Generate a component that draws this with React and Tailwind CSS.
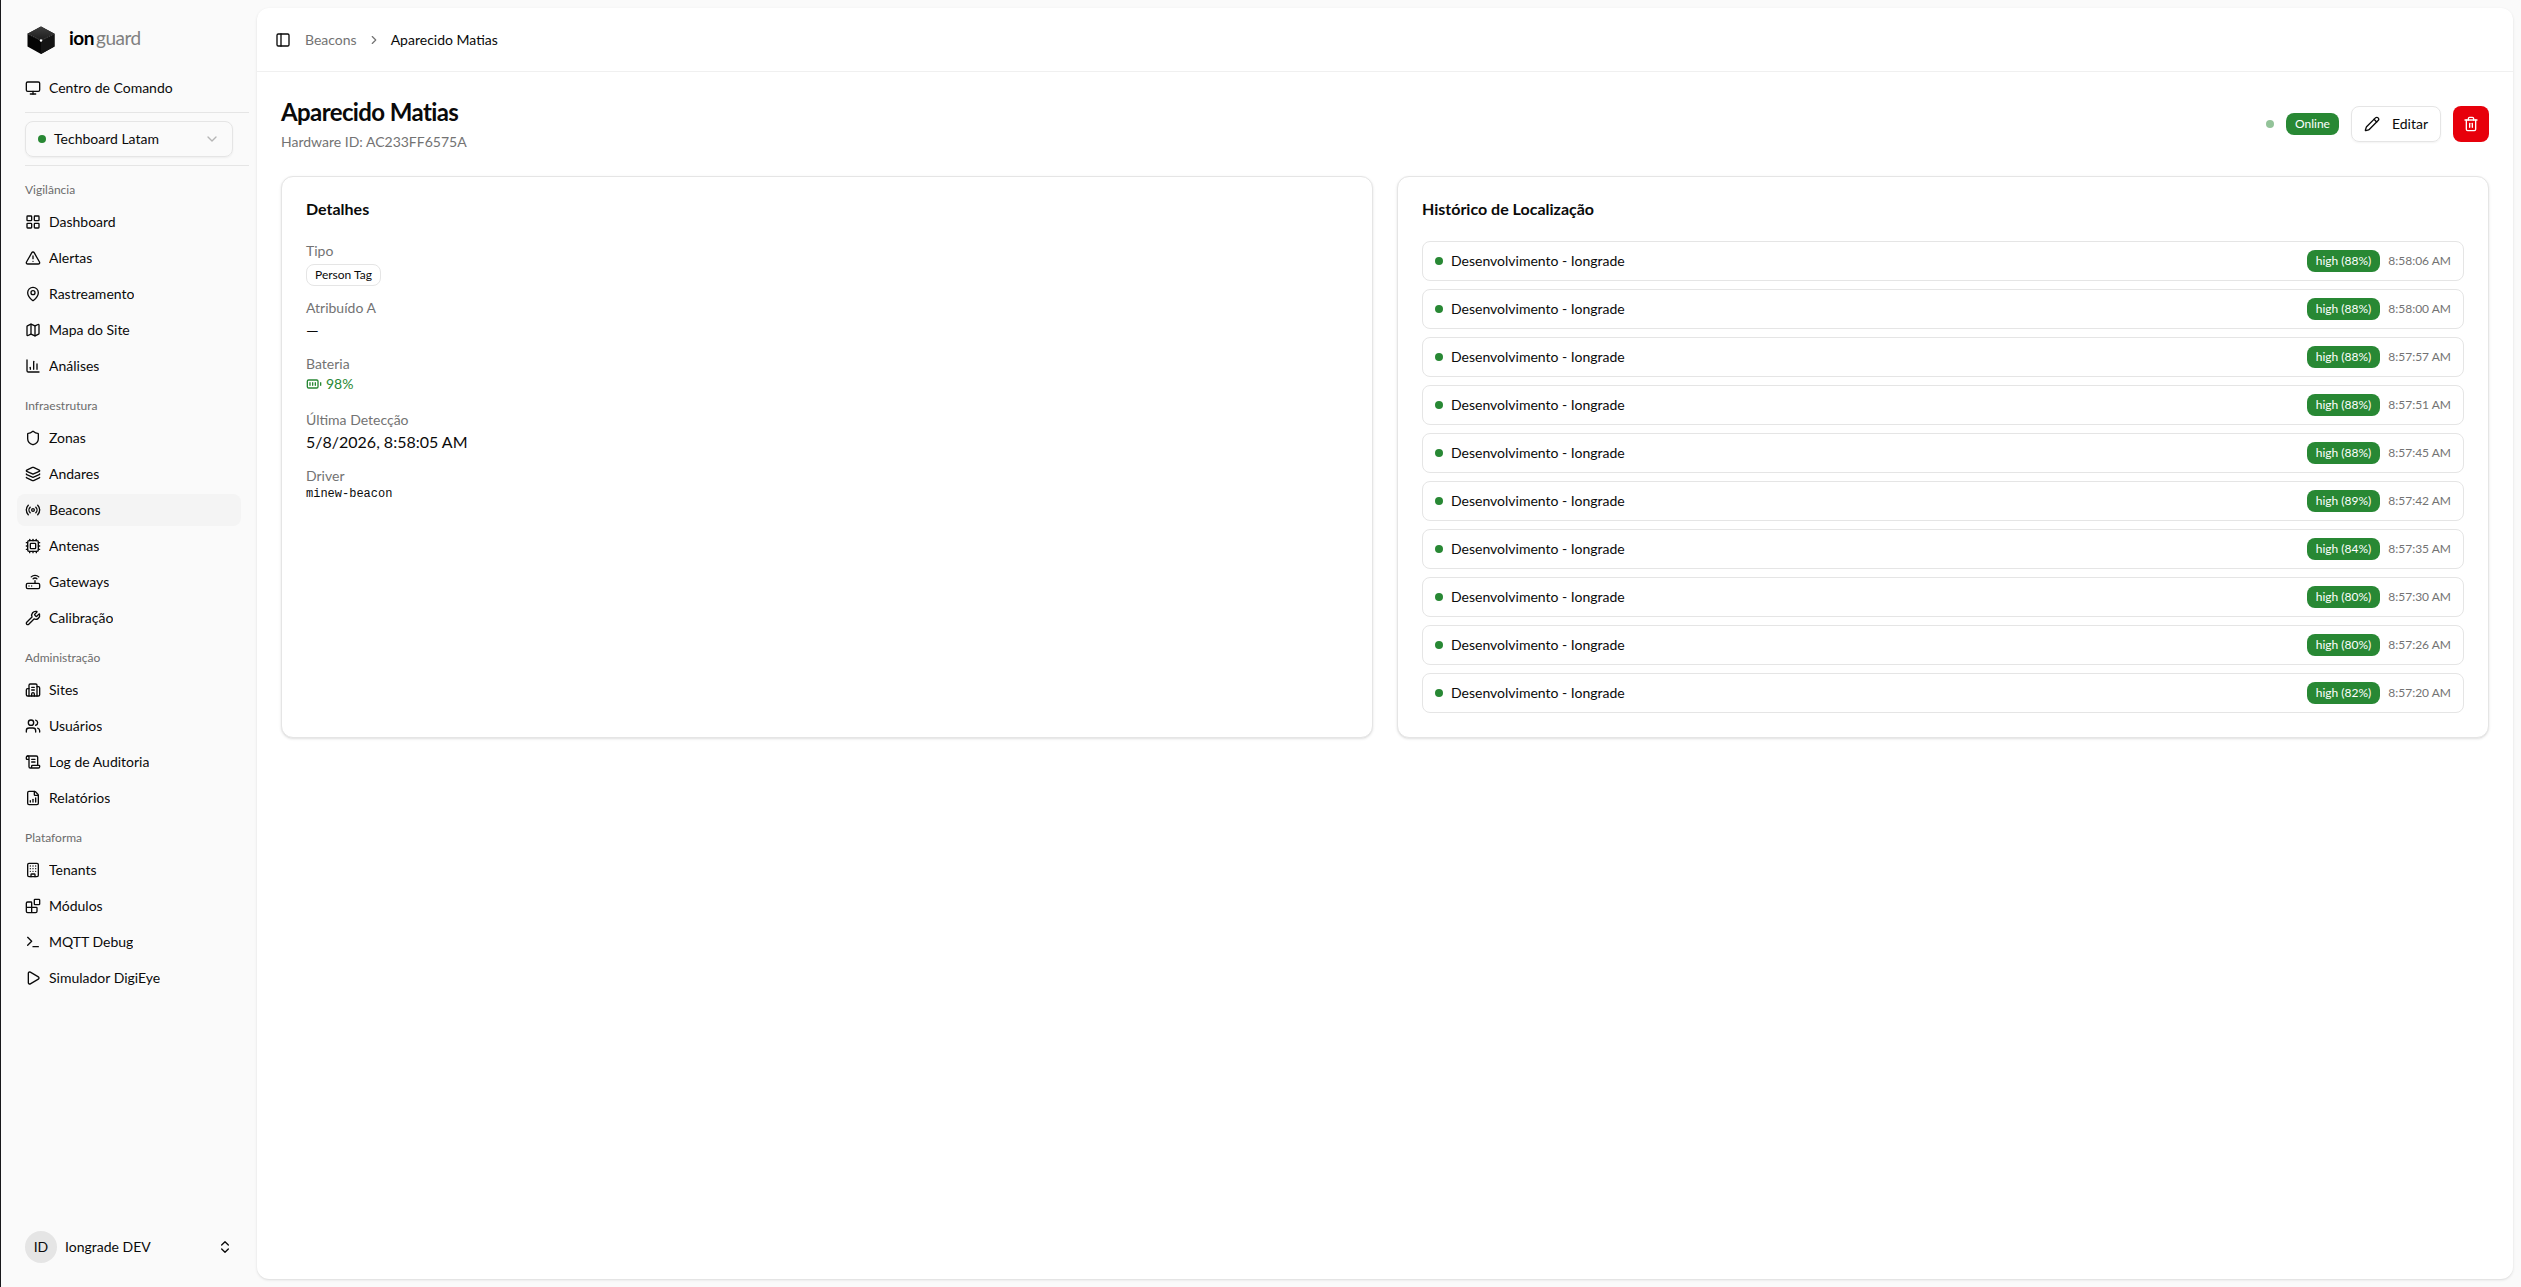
import React from "react";
import {
  Monitor, LayoutGrid, TriangleAlert, MapPin, Map, Shield, Layers, Radio, Cpu, Router, Wrench,
  Building2, Users, ScrollText, FileChartColumnIncreasing, Building, Blocks, Terminal, Play,
  ChevronDown, ChevronRight, ChevronsUpDown, PanelLeft, Pencil, Trash2, BatteryFull, ChartColumn,
} from "lucide-react";

const groups = [
  { label: "Vigilância", items: [["Dashboard", LayoutGrid], ["Alertas", TriangleAlert], ["Rastreamento", MapPin], ["Mapa do Site", Map], ["Análises", ChartColumn]] },
  { label: "Infraestrutura", items: [["Zonas", Shield], ["Andares", Layers], ["Beacons", Radio], ["Antenas", Cpu], ["Gateways", Router], ["Calibração", Wrench]] },
  { label: "Administração", items: [["Sites", Building2], ["Usuários", Users], ["Log de Auditoria", ScrollText], ["Relatórios", FileChartColumnIncreasing]] },
  { label: "Plataforma", items: [["Tenants", Building], ["Módulos", Blocks], ["MQTT Debug", Terminal], ["Simulador DigiEye", Play]] },
];

const history = [
  [88, "8:58:06 AM"], [88, "8:58:00 AM"], [88, "8:57:57 AM"], [88, "8:57:51 AM"], [88, "8:57:45 AM"],
  [89, "8:57:42 AM"], [84, "8:57:35 AM"], [80, "8:57:30 AM"], [80, "8:57:26 AM"], [82, "8:57:20 AM"],
];

function Logo() {
  return (
    <svg viewBox="0 0 32 32" className="size-8" aria-hidden="true">
      <defs>
        <linearGradient id="top" x1="0" y1="0" x2="0" y2="1">
          <stop offset="0" stopColor="#3f3f3f" />
          <stop offset="1" stopColor="#1c1c1c" />
        </linearGradient>
      </defs>
      <path d="M16 2.500 29.500 9.800V22.500L16 30 2.500 22.500V9.800Z" fill="#050505" />
      <path d="M16 2.500 29.500 9.800 16 16.500 2.500 9.800Z" fill="url(#top)" />
      <path d="M16 16.500 29.500 9.800V22.500L16 30Z" fill="#141414" />
      <path d="M2.500 9.800 16 16.500 29.500 9.800" fill="none" stroke="#777" strokeWidth="0.600" strokeDasharray="1.200 0.800" />
      <circle cx="16" cy="16.500" r="1.200" fill="#fff" />
    </svg>
  );
}

function NavItem({ label, icon: Icon, active }) {
  return (
    <a
      href="#"
      aria-current={active ? "page" : undefined}
      className={active
        ? "flex h-8 items-center gap-2 rounded-lg bg-[#f4f4f4] px-2 text-sm"
        : "flex h-8 items-center gap-2 rounded-lg px-2 text-sm"}
    >
      <Icon className="size-4 shrink-0" />
      <span className="truncate">{label}</span>
    </a>
  );
}

function Sidebar() {
  return (
    <aside className="flex w-64 shrink-0 flex-col p-2">
      <div className="flex flex-col gap-2 p-2">
        <a href="#" className="flex h-12 items-center gap-3 px-2">
          <Logo />
          <span className="flex items-baseline gap-[2px] pb-1 text-[19px] leading-7 tracking-tight">
            <span className="font-bold text-black">ion</span>
            <span className="text-[#808080]">guard</span>
          </span>
        </a>
        <NavItem label="Centro de Comando" icon={Monitor} />
      </div>
      <div className="ml-4 h-px shrink-0 bg-[#e5e5e5]" />
      <div className="px-4 py-2">
        <button type="button" className="flex h-9 w-full items-center gap-2 rounded-lg border border-[#e5e5e5] px-3 text-sm shadow-xs">
          <span className="size-2 rounded-full bg-[#288834]" />
          <span className="flex-1 text-left">Techboard Latam</span>
          <ChevronDown className="size-4 text-[#b5b5b5]" />
        </button>
      </div>
      <div className="ml-4 h-px shrink-0 bg-[#e5e5e5]" />
      <nav className="mt-2 flex flex-1 flex-col gap-2 px-2">
        {groups.map((g) => (
          <section key={g.label} aria-label={g.label}>
            <h2 className="flex h-8 items-center px-2 text-xs text-[#6c6c6c]">{g.label}</h2>
            <ul className="flex flex-col gap-1">
              {g.items.map(([label, icon]) => (
                <li key={label}><NavItem label={label} icon={icon} active={label === "Beacons"} /></li>
              ))}
            </ul>
          </section>
        ))}
      </nav>
      <div className="p-2">
        <button type="button" className="flex h-12 w-full items-center gap-2 px-2 text-sm">
          <span className="flex size-8 items-center justify-center rounded-full bg-[#e5e5e5]">ID</span>
          <span className="flex-1 text-left">Iongrade DEV</span>
          <ChevronsUpDown className="size-4" />
        </button>
      </div>
    </aside>
  );
}

function GreenBadge({ children }) {
  return (
    <span className="inline-flex h-[22px] items-center rounded-lg bg-[#288834] px-[9px] text-xs text-white">{children}</span>
  );
}

function Card({ title, children }) {
  return (
    <section className="flex flex-col gap-6 rounded-xl border border-[#e5e5e5] bg-white p-6 shadow-sm">
      <h2 className="text-base leading-4 font-bold">{title}</h2>
      {children}
    </section>
  );
}

function Field({ label, children }) {
  return (
    <div>
      <dt className="text-sm text-[#737373]">{label}</dt>
      <dd className="flow-root min-h-6">{children}</dd>
    </div>
  );
}

export default function App() {
  return (
    <div className="flex min-h-screen border-l border-[#18181b] bg-[#fafafa] font-['Lato',sans-serif] text-[#0a0a0a]">
      <Sidebar />
      <main className="my-2 mr-2 flex-1 rounded-xl bg-white shadow-sm">
        <header className="flex h-16 items-center border-b border-[#f0f0f0] px-[18px] text-sm">
          <button type="button" aria-label="Alternar menu"><PanelLeft className="size-4" /></button>
          <nav aria-label="Breadcrumb" className="ml-[14px] flex items-center gap-[10px]">
            <a href="#" className="text-[#737373]">Beacons</a>
            <ChevronRight className="size-3.5 text-[#737373]" />
            <span aria-current="page">Aparecido Matias</span>
          </nav>
        </header>
        <div className="flex flex-col gap-6 p-6">
          <div className="flex items-center justify-between">
            <div className="flex flex-col gap-1">
              <h1 className="text-2xl leading-8 font-bold tracking-tight">Aparecido Matias</h1>
              <p className="text-sm text-[#737373]">Hardware ID: AC233FF6575A</p>
            </div>
            <div className="flex items-center gap-3">
              <span className="size-2 rounded-full bg-[#93c399]" />
              <GreenBadge>Online</GreenBadge>
              <button type="button" className="flex h-9 items-center gap-3 rounded-lg border border-[#e5e5e5] px-3 text-sm shadow-xs">
                <Pencil className="size-4" />
                Editar
              </button>
              <button type="button" aria-label="Excluir" className="flex size-9 items-center justify-center rounded-lg bg-[#e7000b] text-white">
                <Trash2 className="size-4" />
              </button>
            </div>
          </div>
          <div className="grid grid-cols-2 gap-6">
            <Card title="Detalhes">
              <dl className="flex flex-col gap-3">
                <Field label="Tipo">
                  <span className="mt-[3px] flex h-[22px] w-fit items-center rounded-lg border border-[#e5e5e5] px-2 text-xs">Person Tag</span>
                </Field>
                <Field label="Atribuído A">—</Field>
                <Field label="Bateria">
                  <span className="flex items-center gap-1 text-sm text-[#288834]">
                    <BatteryFull className="size-4" />
                    98%
                  </span>
                </Field>
                <Field label="Última Detecção">5/8/2026, 8:58:05 AM</Field>
                <Field label="Driver">
                  <code className="block font-['Liberation_Mono',monospace] text-xs leading-4">minew-beacon</code>
                </Field>
              </dl>
            </Card>
            <Card title="Histórico de Localização">
              <ul className="flex flex-col gap-2">
                {history.map(([pct, time]) => (
                  <li key={time} className="flex h-10 items-center gap-2 rounded-lg border border-[#e5e5e5] px-3 text-sm">
                    <span className="size-2 rounded-full bg-[#288834]" />
                    <span className="flex-1">Desenvolvimento - Iongrade</span>
                    <GreenBadge>{`high (${pct}%)`}</GreenBadge>
                    <time className="text-xs text-[#737373]">{time}</time>
                  </li>
                ))}
              </ul>
            </Card>
          </div>
        </div>
      </main>
    </div>
  );
}
